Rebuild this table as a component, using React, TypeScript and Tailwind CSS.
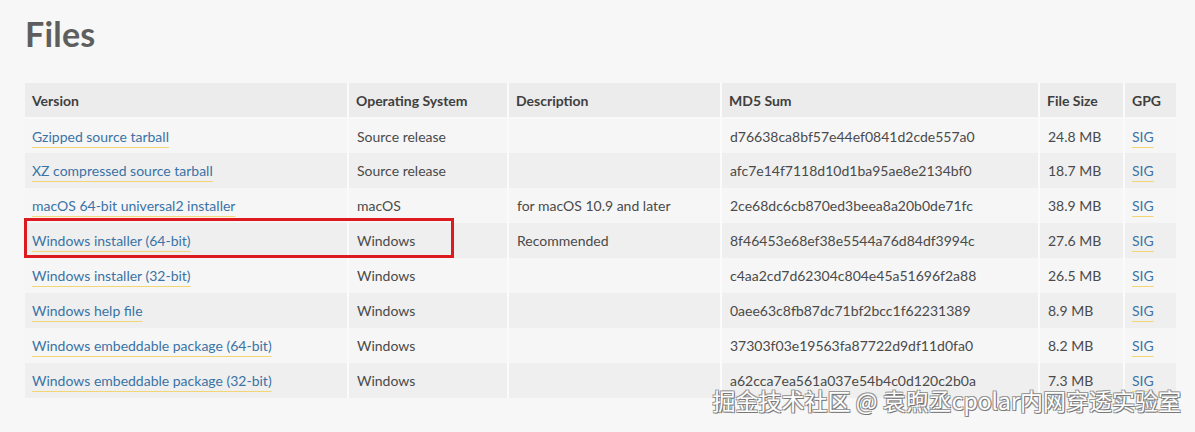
import React from "react";

const rows = [
  ["Gzipped source tarball", "Source release", "", "d76638ca8bf57e44ef0841d2cde557a0", "24.8 MB"],
  ["XZ compressed source tarball", "Source release", "", "afc7e14f7118d10d1ba95ae8e2134bf0", "18.7 MB"],
  ["macOS 64-bit universal2 installer", "macOS", "for macOS 10.9 and later", "2ce68dc6cb870ed3beea8a20b0de71fc", "38.9 MB"],
  ["Windows installer (64-bit)", "Windows", "Recommended", "8f46453e68ef38e5544a76d84df3994c", "27.6 MB"],
  ["Windows installer (32-bit)", "Windows", "", "c4aa2cd7d62304c804e45a51696f2a88", "26.5 MB"],
  ["Windows help file", "Windows", "", "0aee63c8fb87dc71bf2bcc1f62231389", "8.9 MB"],
  ["Windows embeddable package (64-bit)", "Windows", "", "37303f03e19563fa87722d9df11d0fa0", "8.2 MB"],
  ["Windows embeddable package (32-bit)", "Windows", "", "a62cca7ea561a037e54b4c0d120c2b0a", "7.3 MB"],
];

const link =
  "text-[#3a73a6] underline decoration-[#f2d675] decoration-1 underline-offset-[5px]";

export default function App() {
  return (
    <div
      className="relative w-[1195px] h-[432px] overflow-hidden bg-[#f7f7f7] text-[#4a4a4a]"
      style={{ fontFamily: "Lato, 'Noto Sans', sans-serif" }}
    >
      <div className="pl-[25px] pt-[13px]">
        <h1 className="text-[34px] leading-[42px] font-bold text-[#5e5e5e] tracking-[0.2px]">Files</h1>
        <div className="relative mt-[28px] w-[1151px]">
          <table className="w-full table-fixed border-collapse text-[14px]">
            <colgroup>
              <col className="w-[323px]" />
              <col className="w-[160px]" />
              <col className="w-[213px]" />
              <col className="w-[318px]" />
              <col className="w-[85px]" />
              <col className="w-[52px]" />
            </colgroup>
            <thead>
              <tr className="h-[35px] bg-[#ececec] border-b-2 border-[#f9f9f9]">
                {["Version", "Operating System", "Description", "MD5 Sum", "File Size", "GPG"].map((h, i) => (
                  <th
                    key={h}
                    className={`text-left font-bold text-[#3f3f3f] px-[7px] ${i < 5 ? "border-r-2 border-[#fbfbfb]" : ""}`}
                  >
                    {h}
                  </th>
                ))}
              </tr>
            </thead>
            <tbody>
              {rows.map((r, idx) => (
                <tr key={idx} className={`h-[35px] ${idx % 2 === 0 ? "bg-[#f6f6f6]" : "bg-[#efefef]"}`}>
                  <td className="px-[7px] border-r-2 border-[#fbfbfb] whitespace-nowrap">
                    <a className={link}>{r[0]}</a>
                  </td>
                  <td className="px-[8px] border-r-2 border-[#fbfbfb] whitespace-nowrap">{r[1]}</td>
                  <td className="px-[8px] border-r-2 border-[#fbfbfb] whitespace-nowrap">{r[2]}</td>
                  <td className="px-[8px] border-r-2 border-[#fbfbfb] whitespace-nowrap">{r[3]}</td>
                  <td className="px-[8px] border-r-2 border-[#fbfbfb] whitespace-nowrap">{r[4]}</td>
                  <td className="px-[7px] whitespace-nowrap">
                    <a className={link}>SIG</a>
                  </td>
                </tr>
              ))}
            </tbody>
          </table>
          <div className="absolute left-[-1px] top-[135px] w-[430px] h-[40px] border-[3px] border-[#dc1a1f]" />
        </div>
      </div>
      <div
        className="absolute right-[14px] top-[385px] text-[23px] leading-[30px] text-white whitespace-nowrap"
        style={{
          fontFamily: "'Noto Sans CJK SC', 'Noto Sans', sans-serif",
          textShadow: "1px 1px 0 #777, -1px -1px 0 #999, 1px -1px 0 #999, -1px 1px 0 #999",
        }}
      >
        掘金技术社区 @ 袁煦丞cpolar内网穿透实验室
      </div>
    </div>
  );
}
